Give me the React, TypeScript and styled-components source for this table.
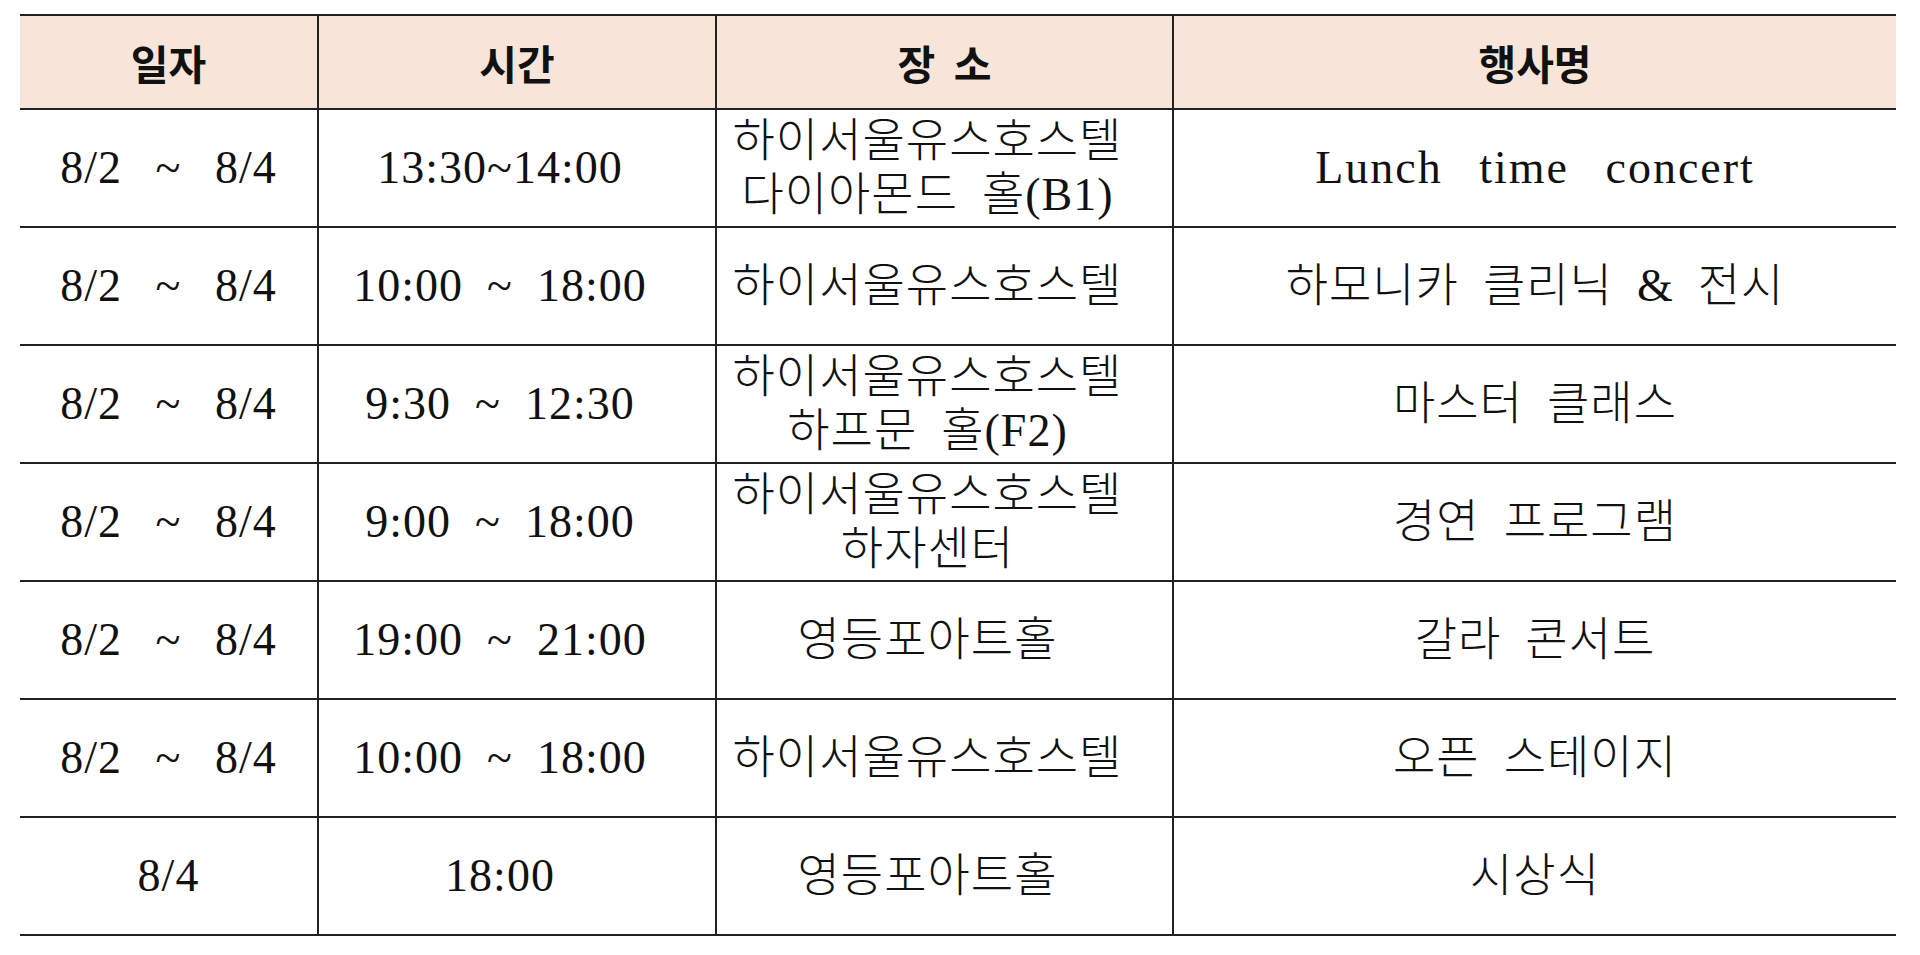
import React from 'react';
import styled, { createGlobalStyle } from 'styled-components';

const GlobalStyle = createGlobalStyle`
  html, body {
    margin: 0;
    padding: 0;
    background: #ffffff;
  }
`;

const Page = styled.div`
  padding: 14px 24px 0 20px;
`;

const Table = styled.table`
  width: 1876px;
  border-collapse: collapse;
  table-layout: fixed;
  color: #111;
  font-family: 'Liberation Serif', 'Noto Sans CJK KR', serif;
`;

const HeadCell = styled.th`
  height: 92px;
  padding: 0;
  background: #f6e5d8;
  border-top: 2px solid #222;
  border-bottom: 2px solid #222;
  border-left: 2px solid #222;
  font-family: 'Noto Sans CJK KR', sans-serif;
  font-weight: 700;
  font-size: 41px;
  text-align: center;
  vertical-align: middle;

  &:first-child {
    border-left: none;
  }
`;

const Cell = styled.td<{ $shift?: boolean; $wordGap?: number; $letterGap?: number }>`
  height: 116px;
  padding: 0 ${(p) => (p.$shift ? '34px' : '0')} 0 0;
  border-bottom: 2px solid #222;
  border-left: 2px solid #222;
  font-size: 46px;
  font-weight: 300;
  line-height: 54px;
  letter-spacing: ${(p) => p.$letterGap ?? 1}px;
  word-spacing: ${(p) => p.$wordGap ?? 11.5}px;
  text-align: center;
  vertical-align: middle;

  &:first-child {
    border-left: none;
  }
`;

const Line = styled.div``;

type Row = { date: string; time: string; place: string[]; name: string; latinName?: boolean };

const rows: Row[] = [
  { date: '8/2 ~ 8/4', time: '13:30~14:00', place: ['하이서울유스호스텔', '다이아몬드 홀(B1)'], name: 'Lunch time concert', latinName: true },
  { date: '8/2 ~ 8/4', time: '10:00 ~ 18:00', place: ['하이서울유스호스텔'], name: '하모니카 클리닉 & 전시' },
  { date: '8/2 ~ 8/4', time: '9:30 ~ 12:30', place: ['하이서울유스호스텔', '하프문 홀(F2)'], name: '마스터 클래스' },
  { date: '8/2 ~ 8/4', time: '9:00 ~ 18:00', place: ['하이서울유스호스텔', '하자센터'], name: '경연 프로그램' },
  { date: '8/2 ~ 8/4', time: '19:00 ~ 21:00', place: ['영등포아트홀'], name: '갈라 콘서트' },
  { date: '8/2 ~ 8/4', time: '10:00 ~ 18:00', place: ['하이서울유스호스텔'], name: '오픈 스테이지' },
  { date: '8/4', time: '18:00', place: ['영등포아트홀'], name: '시상식' },
];

const App = () => (
  <Page>
    <GlobalStyle />
    <Table>
      <colgroup>
        <col style={{ width: 298 }} />
        <col style={{ width: 398 }} />
        <col style={{ width: 457 }} />
        <col />
      </colgroup>
      <thead>
        <tr>
          <HeadCell>일자</HeadCell>
          <HeadCell>시간</HeadCell>
          <HeadCell>장&nbsp;&nbsp;소</HeadCell>
          <HeadCell>행사명</HeadCell>
        </tr>
      </thead>
      <tbody>
        {rows.map((r, i) => (
          <tr key={i}>
            <Cell $wordGap={21}>{r.date}</Cell>
            <Cell $shift>{r.time}</Cell>
            <Cell $shift>
              {r.place.map((p) => (
                <Line key={p}>{p}</Line>
              ))}
            </Cell>
            <Cell $wordGap={r.latinName ? 23 : 11.5} $letterGap={r.latinName ? 2 : 1}>
              {r.name}
            </Cell>
          </tr>
        ))}
      </tbody>
    </Table>
  </Page>
);

export default App;
